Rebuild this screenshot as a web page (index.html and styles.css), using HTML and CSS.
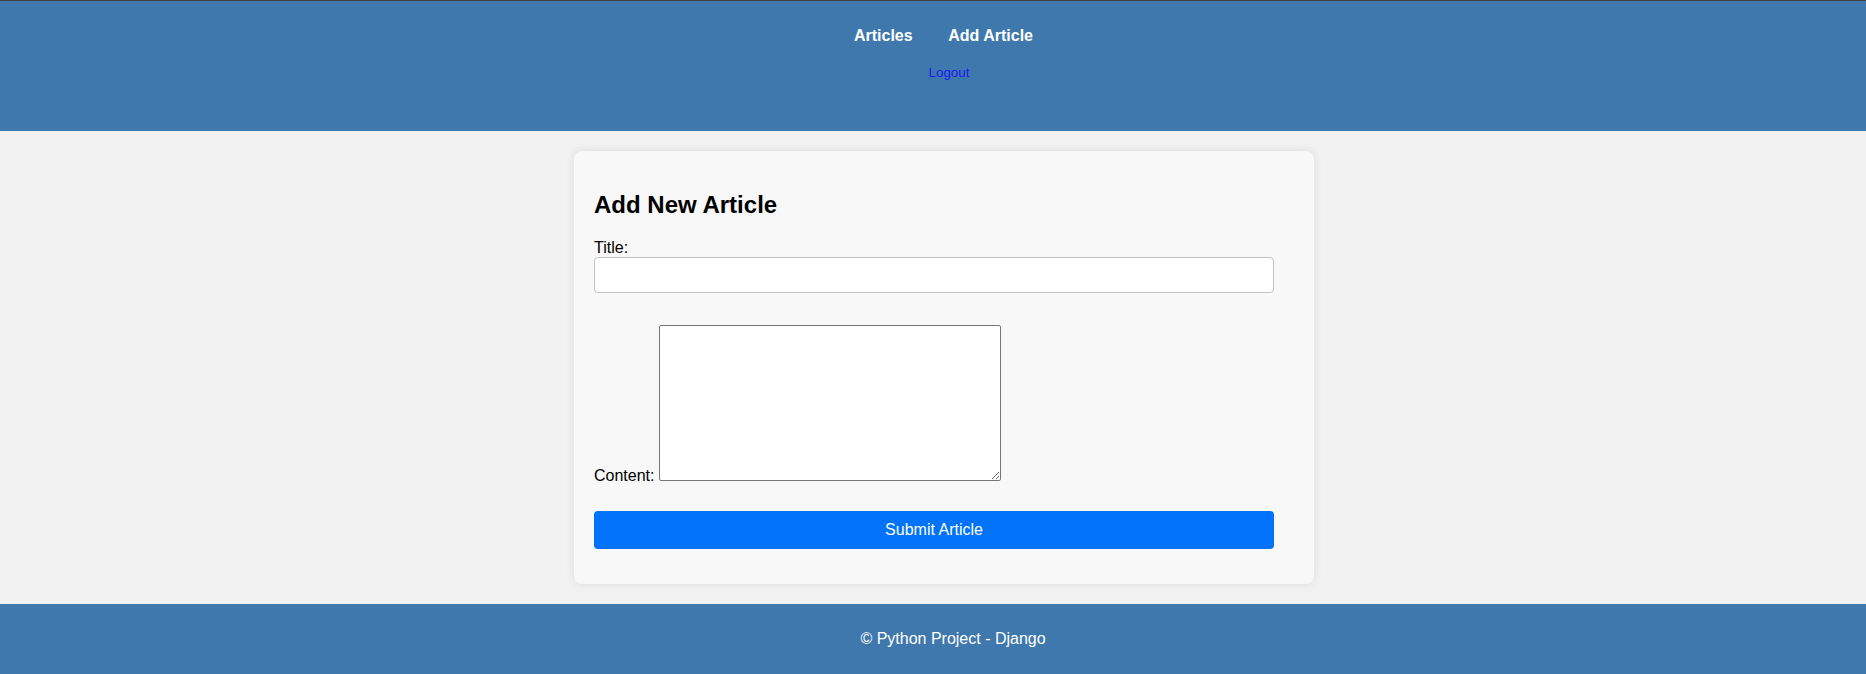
FILE: index.html
```html
<!DOCTYPE html>
<html lang="en">
<head>
<meta charset="utf-8">
<title>Add Article</title>
<link rel="stylesheet" href="styles.css">
</head>
<body>
<header class="site-header">
  <nav>
    <ul class="nav-list">
      <li><a href="#">Articles</a></li>
      <li><a href="#">Add Article</a></li>
    </ul>
  </nav>
  <form class="logout-form">
    <button type="button" class="logout-btn">Logout</button>
  </form>
</header>
<main class="main">
  <section class="card">
    <h2 class="card-title">Add New Article</h2>
    <form class="article-form">
      <label class="field-label" for="title">Title:</label>
      <input class="text-input" id="title" type="text">
      <div class="content-row"><label for="content">Content:</label> <textarea id="content" class="content-area"></textarea></div>
      <button type="button" class="submit-btn">Submit Article</button>
    </form>
  </section>
</main>
<footer class="site-footer">
  <p class="footer-text">© Python Project - Django</p>
</footer>
</body>
</html>
```
FILE: styles.css
```css
html, body {
  margin: 0;
  padding: 0;
}
body {
  background: #f2f2f2;
  font-family: "Liberation Sans", Arial, sans-serif;
  font-size: 16px;
  color: #000;
}
.site-header {
  box-sizing: border-box;
  height: 131px;
  border-top: 1px solid #3d3d3d;
  background: #3f78ad;
  text-align: center;
}
.nav-list {
  list-style: none;
  margin: 0;
  padding: 26px 0 0 21px;
  display: flex;
  justify-content: center;
  gap: 35.6px;
  line-height: normal;
}
.nav-list a {
  color: #fff;
  font-weight: bold;
  text-decoration: none;
}
.logout-form {
  margin: 0;
  padding: 18px 0 0 32px;
}
.logout-btn {
  background: none;
  border: none;
  padding: 0;
  font-family: "Liberation Sans", Arial, sans-serif;
  font-size: 13.33px;
  color: #1a1af2;
  cursor: pointer;
}
.main {
  padding: 20px 0 20px 22px;
}
.card {
  box-sizing: border-box;
  width: 740px;
  margin: 0 auto;
  padding: 20px;
  background: #f8f8f8;
  border-radius: 8px;
  box-shadow: 0 0 10px rgba(0, 0, 0, 0.1);
}
.card-title {
  margin: 20px 0;
  font-size: 24px;
  font-weight: bold;
}
.field-label {
  display: block;
}
.text-input {
  display: block;
  box-sizing: border-box;
  width: 680px;
  height: 36px;
  margin: 0;
  padding: 8px;
  border: 1px solid #c4c4c4;
  border-radius: 4px;
  background: #fff;
  font-family: "Liberation Sans", Arial, sans-serif;
  font-size: 16px;
}
.content-row {
  margin-top: 32px;
}
.content-area {
  box-sizing: border-box;
  width: 342px;
  height: 156px;
  margin: 0;
  border: 1px solid #767676;
  border-radius: 2px;
  background: #fff;
  vertical-align: baseline;
}
.submit-btn {
  display: block;
  box-sizing: border-box;
  width: 680px;
  height: 38px;
  margin: 26px 0 15px;
  border: none;
  border-radius: 4px;
  background: #0073fa;
  color: #fff;
  font-family: "Liberation Sans", Arial, sans-serif;
  font-size: 16px;
}
.site-footer {
  box-sizing: border-box;
  height: 70px;
  padding: 26px 0 0 40px;
  background: #3f78ad;
  color: #fff;
  text-align: center;
}
.footer-text {
  margin: 0;
}
```
